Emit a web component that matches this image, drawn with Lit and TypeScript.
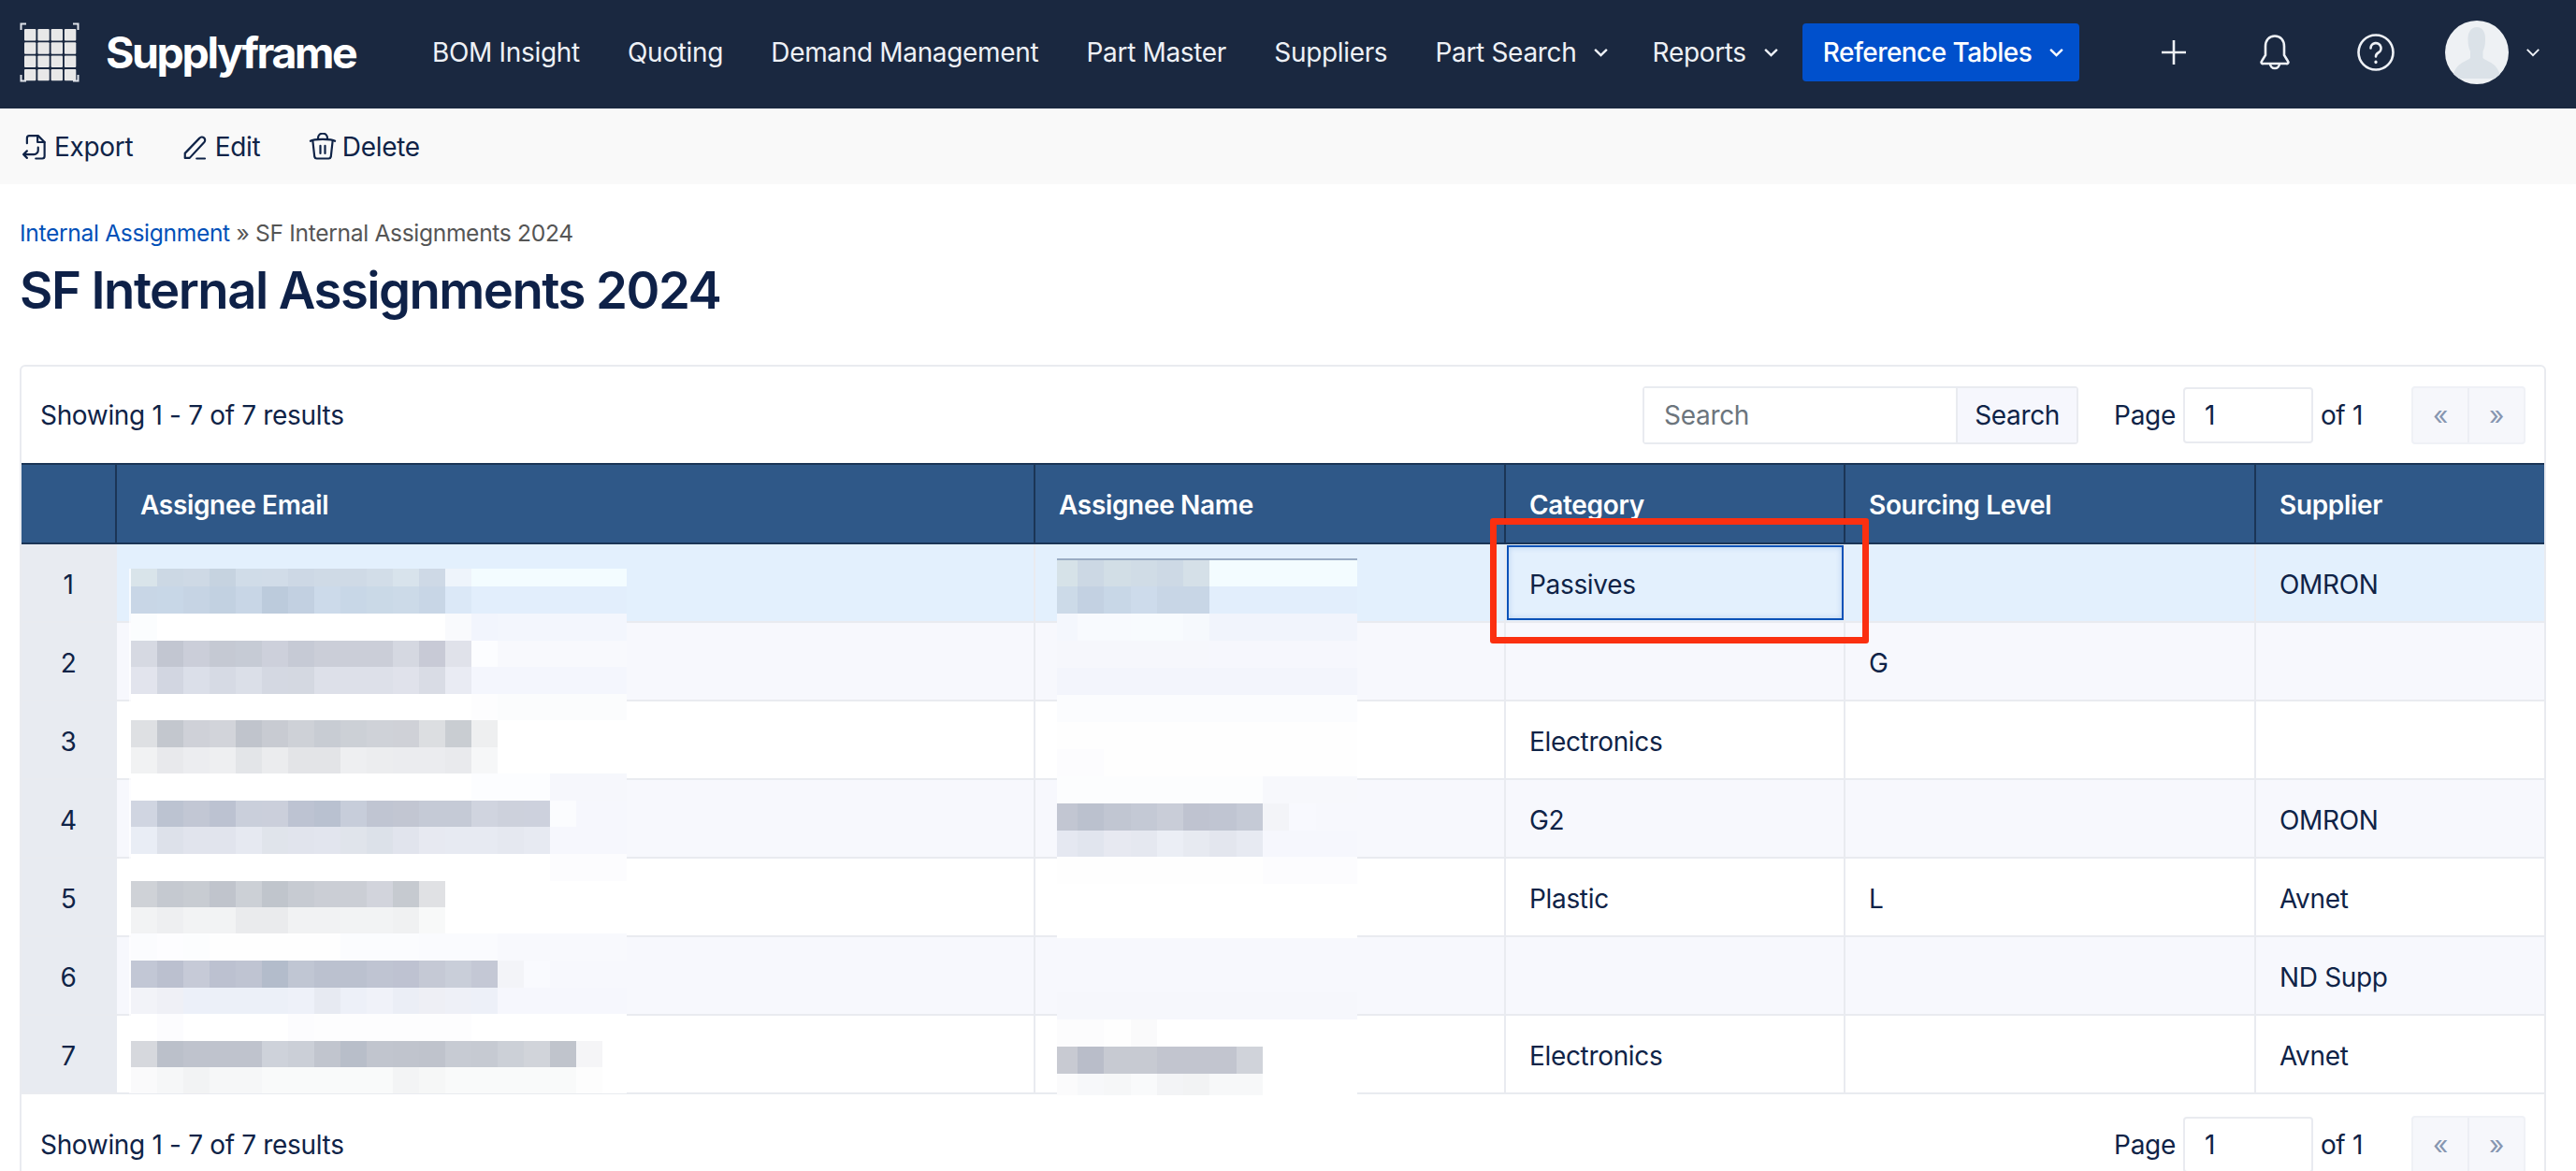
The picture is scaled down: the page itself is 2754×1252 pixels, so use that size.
import { LitElement, html, css, svg } from "lit";
import { customElement } from "lit/decorators.js";

const expand = (s: string): string[] =>
  s.split(" ").flatMap((t) => {
    const [c, n] = t.split("*");
    return Array(n ? +n : 1).fill("#" + c);
  });

const EMAIL_H = [19, 29, 29, 28, 29, 28, 29, 28, 29, 28, 29, 29, 28, 28, 29, 29, 28, 29, 28, 28];
const EMAIL = [
  "d9e4ea ccd8e4 ced9e5 c6d3e0 d0dce8 d1dce8 cdd8e5 cfdae6 cfdae6 d2dde8 d8e3ec ced9e6 eef4fb f3fcff*6",
  "c8d6e6 c8d7e7 c6d4e4 c2d1e1 c8d6e6 bccbdc c2d0e1 ccdaea c8d7e7 cad9e7 ccdae8 c8d6e6 dbe8f7 e2eefc*6",
  "fbfdfe ffffff*11 f9fafd f2f5fd f3f6fd*5",
  "d6d9e2 c2c6d1 cbced9 c5c9d3 c6cbd5 cdd0db c6cad5 cbced8 cbced8 cbced8 d5d8e1 c8cad6 e0e2ea fcfdff f8f9fd*5",
  "e2e4ed d2d6e1 dbdfe9 d6dae4 dbdfe8 d4d8e2 d4d8e1 dde0e9 dde0e9 dde0e9 e0e2eb d9dce5 e9ebf3 f4f6fd*6",
  "ffffff*13 fdfdfe fbfcfd*5",
  "dee0e3 c3c7ce cfd1d8 d2d4da c0c4cc c8cbd2 ced1d7 c8ccd3 ccd0d6 cfd2d8 cfd1d7 dcdee1 c9cdd2 eeeff0 ffffff*5",
  "f1f2f3 e8e9ec ecedf0 eeeff1 e3e5e8 ebecee e3e4e7 e3e4e7 eeeff1 ecedef ebecef ebecef e9eaed f6f7f8 ffffff*5",
  "ffffff*13 fcfdff*3 f6f7fc*3",
  "d0d5e1 bcc3d1 c2c7d4 bcc2d1 cacfdb cbcfdb bdc3d2 b9c1d0 c7cdda c0c5d2 c2c6d2 c5cad6 c5cad6 d0d4df cdd1dc cdd1dd fbfcfe f6f7fd*2",
  "e9edf5 dde1ea e1e4ed e1e4ed e6e9f1 e0e4eb e1e4ed e2e5ee e0e4eb dce1e9 e1e4ed e7e9f1 e7eaf2 e7eaf2 e5e8f0 e7eaf2 f6f7fd*3",
  "ffffff*16 fcfcfe*3",
  "cfd2d7 c5c9d0 c8ccd2 c0c4cc ccd0d6 c0c5cc c7cbd2 cbced5 cbced5 d2d4dc c6cad0 e0e1e4 ffffff*7",
  "f2f3f4 eeeff1 f2f3f4 f2f3f4 eaebed eaebed f1f2f3 f1f2f3 f2f3f4 f2f3f4 f0f1f2 f8f9f9 ffffff*7",
  "fbfcfe fdfdff fcfdfe fefefe*5 fbfcfe*3 fafbfe*3 f8f9fd*5",
  "c2c7d5 bbc0cf c6cad7 bcc1d0 bfc4d2 b3bccb c0c6d3 bbc1cf bbc1cf bfc4d2 bec2d1 c5c9d5 c9ced9 c4c8d5 f3f4f8 f9fafe f7f8fd*3",
  "f2f3f8 eff0f6 ecf0f9 ecf0f8 ecf0f8 ecf0f8 eef1f9 e7eaf2 edf0f8 f0f2f9 ebeef6 eeeff5 eef0f7 edf0f8 f6f7fd*5",
  "ffffff fcfcfe ffffff*4 fcfcfe fdfdfe*6 ffffff*6",
  "d6d8dd bbc0ca bfc3cd bfc3cd bfc3cd ced2da cbcfd7 c1c5ce b8bec9 c1c5ce c0c4cd bfc3cc c7cbd3 c6cad2 ccd0d7 d1d4da c0c4cc f5f5f7 ffffff",
  "fafafb f6f7f8 f2f3f4 f6f7f8 f6f7f8 f9fafa*5 f3f4f5 f6f7f7 f9fafa*5 fdfdfd ffffff",
];

const NAME_H = [28, 29, 29, 29, 29, 29, 29, 29, 29, 29, 28, 29, 29, 29, 29, 29, 29, 29, 29, 23];
const NAME = [
  "d6e2e8 ccd8e4 d2dee6 d0dce6 cdd9e5 d5e0e8 f3fcff*6",
  "ccdae8 c3d1e2 c8d7e7 cddbeb c8d6e6 c8d6e6 e2eefc*6",
  "f4f7fd f8fafe f8fafe f8fbfe f8fbfe f6f9fd f1f4fc*6",
  "f6f7fc*6 f6f7fd*6",
  "f3f5fc*12",
  "fbfcfe*12",
  "fefefe*12",
  "fcfcfe*2 fefefe*10",
  "fcfdfe*8 f7f8fc*4",
  "c2c6d2 bbc1ce c1c6d2 c4c9d5 c9cdd8 bfc3d0 c0c5d2 c5cad6 f3f4f8 f8f9fe f7f8fd*2",
  "e5e8f1 e1e5ee e7e9f1 e5e8f0 ebeef5 e7eaf1 e3e6ee e7eaf2 f6f7fd*4",
  "fefefe*8 fcfcfe*4",
  "ffffff*12",
  "ffffff*12",
  "f7f8fd*12",
  "f7f8fd*12",
  "f6f7fc*12",
  "fcfcfd*2 fefefe fafafb ffffff*8",
  "c8cad2 b9bdc9 c7cad2 c7cad2 c2c5cf c2c5cf c2c5cf d0d3da ffffff*4",
  "fbfbfc f7f8fa f6f7f8 f9fafb f3f4f6 f2f3f4 f7f8f9 f7f8f9 ffffff*4",
];

const ROWS = [
  ["1", "Passives", "", "OMRON"],
  ["2", "", "G", ""],
  ["3", "Electronics", "", ""],
  ["4", "G2", "", "OMRON"],
  ["5", "Plastic", "L", "Avnet"],
  ["6", "", "", "ND Supp"],
  ["7", "Electronics", "", "Avnet"],
];

const chevron = (c = "") =>
  html`<svg class="chev ${c}" viewBox="0 0 18 11"><path d="M2 2l7 7 7-7" /></svg>`;

@customElement("app-root")
export class AppRoot extends LitElement {
  static styles = css`
    :host {
      display: block;
      width: 2754px;
      height: 1252px;
      overflow: hidden;
      background: #fff;
      font-family: Inter, "Noto Sans", sans-serif;
      font-size: 28px;
      letter-spacing: -0.33px;
      color: #0f2347;
    }
    .nav {
      height: 116px;
      box-sizing: border-box;
      padding-bottom: 4px;
      background: #1a2840;
      display: flex;
      align-items: center;
      color: #eef1f6;
    }
    .logo {
      width: 64px;
      height: 64px;
      margin-left: 21px;
      flex: none;
    }
    .brand {
      margin-left: 28px;
      width: 349px;
      font-size: 46.5px;
      font-weight: 700;
      letter-spacing: -2.4px;
      color: #fff;
    }
    .links {
      display: flex;
      align-items: center;
      gap: 51.2px;
      white-space: nowrap;
    }
    .links .dd {
      display: flex;
      align-items: center;
      gap: 18px;
    }
    .links .dd + .dd {
      margin-left: -5px;
    }
    .chev {
      width: 17px;
      height: 10px;
      fill: none;
      stroke: currentColor;
      stroke-width: 2.6;
    }
    .refbtn {
      margin-left: 25px;
      height: 62px;
      width: 296px;
      box-sizing: border-box;
      padding-left: 22px;
      background: #0050cc;
      border-radius: 4px;
      display: flex;
      align-items: center;
      gap: 18px;
      color: #fff;
      font-weight: 500;
      letter-spacing: -0.55px;
      white-space: nowrap;
    }
    .tools {
      display: flex;
      align-items: center;
      margin-left: 88px;
    }
    .plus {
      width: 26px;
      height: 26px;
      stroke: #eef1f6;
      stroke-width: 2.6;
      fill: none;
    }
    .bell {
      margin-left: 78px;
      width: 34px;
      height: 38px;
      stroke: #eef1f6;
      stroke-width: 2.6;
      fill: none;
    }
    .help {
      margin-left: 71px;
      width: 40px;
      height: 40px;
      stroke: #eef1f6;
      stroke-width: 2.6;
      fill: none;
    }
    .avatar {
      margin-left: 54px;
      width: 68px;
      height: 68px;
      flex: none;
    }
    .tools .chev {
      margin-left: 18px;
      width: 16px;
      stroke-width: 2.2;
    }
    .toolbar {
      height: 81px;
      background: #f9f9f9;
      display: flex;
      align-items: center;
      padding-left: 22px;
      gap: 51.5px;
    }
    .action {
      display: flex;
      align-items: center;
      gap: 6px;
      color: #0f2347;
    }
    .action svg {
      width: 30px;
      height: 30px;
      fill: none;
      stroke: #0f2347;
      stroke-width: 1.75;
      stroke-linecap: round;
      stroke-linejoin: round;
    }
    .content {
      padding: 35px 0 0 21px;
    }
    .crumb {
      font-size: 24.6px;
      line-height: 34px;
      color: #555;
    }
    .crumb a {
      color: #0050b8;
    }
    h1 {
      margin: 10px 0 46px;
      font-size: 54.5px;
      line-height: 68px;
      font-weight: 600;
      letter-spacing: -1.55px;
      color: #0e2148;
    }
    .card {
      position: relative;
      width: 2701px;
      box-sizing: border-box;
      border: 2px solid #e9ebf0;
      border-radius: 6px 6px 0 0;
    }
    .bar {
      height: 103px;
      display: flex;
      align-items: center;
      padding: 0 20px;
    }
    .bar.foot {
      margin-top: 2px;
    }
    .spacer {
      flex: 1;
    }
    .search {
      display: flex;
      height: 62px;
      width: 466px;
      box-sizing: border-box;
      border: 2px solid #e9ebf0;
      border-radius: 4px;
      margin-right: 38px;
    }
    .search input {
      width: 333px;
      box-sizing: border-box;
      border: 0;
      padding: 0 0 0 21px;
      font: inherit;
      letter-spacing: inherit;
      outline: none;
      background: #fff;
    }
    .search input::placeholder {
      color: #6c757d;
      opacity: 1;
    }
    .search .go {
      flex: 1;
      background: #f6f7fd;
      border-left: 2px solid #e9ebf0;
      display: flex;
      align-items: center;
      justify-content: center;
    }
    .pg {
      width: 139px;
      height: 60px;
      box-sizing: border-box;
      margin: 0 8px;
      border: 2px solid #e9ebf0;
      border-radius: 4px;
      padding: 0 0 0 21px;
      font: inherit;
      letter-spacing: inherit;
      color: #0f2347;
      outline: none;
      background: #fff;
    }
    .pager {
      margin-left: 52px;
      display: flex;
      width: 122px;
      height: 62px;
      box-sizing: border-box;
      border: 2px solid #eff1f6;
      border-radius: 4px;
      background: #f6f7fb;
      color: #8696b0;
    }
    .pager span {
      flex: 1;
      display: flex;
      align-items: center;
      justify-content: center;
    }
    .pager span + span {
      border-left: 2px solid #eceef4;
    }
    .table {
      position: relative;
    }
    .row {
      display: grid;
      grid-template-columns: 102px 982px 503px 363px 439px 1fr;
      height: 84px;
      box-sizing: border-box;
    }
    .head {
      height: 87px;
      background: #2f5888;
      color: #fff;
      font-weight: 600;
      border-top: 2px solid #1b3556;
      border-bottom: 2px solid #1b3556;
    }
    .head > div {
      border-right: 2px solid #1b3556;
    }
    .head > div:last-child {
      border-right: 0;
    }
    .cell {
      display: flex;
      align-items: center;
      padding: 3px 0 0 25px;
      box-sizing: border-box;
      position: relative;
    }
    .body {
      border-bottom: 2px solid #e9ebf0;
    }
    .body.alt {
      background: #f7f8fd;
    }
    .body.sel {
      background: #e3f0fd;
    }
    .body .cell {
      border-right: 2px solid #e9ebf0;
    }
    .body .cell:last-child {
      border-right: 0;
    }
    .body .num {
      background: #e8ebf1;
      justify-content: center;
      padding: 3px 2px 0 0;
      border-right: 0;
    }
    .picked::after {
      content: "";
      position: absolute;
      inset: 1px 0 1px 1px;
      border: 2px solid #0b52b8;
      box-shadow: inset 0 0 6px rgba(11, 82, 184, 0.2);
    }
    .mosaic {
      position: absolute;
      overflow: hidden;
    }
    .mosaic.email {
      border-left: 2px solid rgba(255, 255, 255, 0.7);
    }
    .mosaic.name {
      border-top: 2px solid #9aacc4;
    }
    .mrow {
      display: flex;
    }
    .mrow div {
      flex: none;
      height: 100%;
    }
    .mark {
      position: absolute;
      left: 1570px;
      top: 59px;
      width: 405px;
      height: 134px;
      box-sizing: border-box;
      border: 7px solid #fb3010;
      border-radius: 3px;
    }
  `;

  private mosaic(cls: string, left: number, top: number, width: number, rows: string[], heights: number[], first: number, col: number) {
    return html`<div class="mosaic ${cls}" style="left:${left}px;top:${top}px;width:${width}px">
      ${rows.map(
        (r, i) => html`<div class="mrow" style="height:${heights[i]}px">
          ${expand(r).map(
            (c, j) => html`<div style="width:${j === 0 ? first : col}px;background:${c}"></div>`
          )}
        </div>`
      )}
    </div>`;
  }

  private pagerBar(search: boolean) {
    return html`<div class="bar ${search ? "" : "foot"}">
      <span>Showing 1 - 7 of 7 results</span>
      <div class="spacer"></div>
      ${search
        ? html`<div class="search">
            <input placeholder="Search" />
            <div class="go">Search</div>
          </div>`
        : ""}
      <span>Page</span>
      <input class="pg" value="1" />
      <span>of 1</span>
      <div class="pager"><span>«</span><span>»</span></div>
    </div>`;
  }

  private logo() {
    const squares = [];
    for (let y = 0; y < 4; y++)
      for (let x = 0; x < 4; x++)
        squares.push(svg`<rect x=${5 + x * 14.3} y=${7 + y * 14.3} width="12.4" height="12.4" rx="1" fill="#e8e8e8" />`);
    return html`<svg class="logo" viewBox="0 0 64 64">
      ${squares}
      <path
        d="M7 1.5H1.5V8M57 1.5h5.5V8M7 62.5H1.5V56M57 62.5h5.5V56"
        fill="none"
        stroke="#dfe3ea"
        stroke-width="2"
      />
    </svg>`;
  }

  render() {
    return html`
      <div class="nav">
        ${this.logo()}
        <div class="brand">Supplyframe</div>
        <div class="links">
          <span>BOM Insight</span>
          <span>Quoting</span>
          <span>Demand Management</span>
          <span>Part Master</span>
          <span>Suppliers</span>
          <span class="dd">Part Search ${chevron()}</span>
          <span class="dd">Reports ${chevron()}</span>
        </div>
        <div class="refbtn">Reference Tables ${chevron()}</div>
        <div class="tools">
          <svg class="plus" viewBox="0 0 26 26"><path d="M13 0v26M0 13h26" /></svg>
          <svg class="bell" viewBox="0 0 34 38">
            <path d="M17 1.5C10.500 1.500 7 6.500 7 12.500V22L3 28.500a1.500 1.500 0 0 0 1.500 2.500h25a1.500 1.500 0 0 0 1.500-2.500L27 22V12.500C27 6.500 23.500 1.500 17 1.500z" />
            <path d="M12 31a5 5 0 0 0 10 0" />
          </svg>
          <svg class="help" viewBox="0 0 40 40">
            <circle cx="20" cy="20" r="18.500" />
            <path d="M14.500 15.500a5.500 5.500 0 1 1 8 5c-1.800 1-2.500 2-2.500 4" stroke-linecap="round" />
            <path d="M20 30v.6" stroke-linecap="round" stroke-width="3.200" />
          </svg>
          <svg class="avatar" viewBox="0 0 68 68">
            <defs>
              <clipPath id="av"><circle cx="34" cy="34" r="34" /></clipPath>
            </defs>
            <g clip-path="url(#av)">
              <rect width="68" height="68" fill="#eef1f4" />
              <path
                d="M34 7c7 0 9.500 7 9 14 0 5-1 9-2.500 12v7c4 4 17 5 19 22H8c2-17 15-18 19-22v-7c-1.500-3-2.500-7-2.500-12C24 14 27 7 34 7z"
                fill="#dbe2e8"
              />
            </g>
          </svg>
          ${chevron()}
        </div>
      </div>
      <div class="toolbar">
        <div class="action">
          <svg viewBox="0 0 24 24">
            <path d="M5.500 9V4.500a2 2 0 0 1 2-2H15l5.500 5.500v12a2 2 0 0 1-2 2H13" />
            <path d="M14.500 2.500V8h6" />
            <path d="M15 12.500V15a3.500 3.500 0 0 1-3.500 3.500H2.500M5.500 15.500l-3 3 3 3" />
          </svg>
          Export
        </div>
        <div class="action">
          <svg viewBox="0 0 24 24">
            <path d="M3 21.500v-4L15.500 4.500a2.600 2.600 0 0 1 4 3.500L7 21.500H3z" />
            <path d="M13 22h7" />
          </svg>
          Edit
        </div>
        <div class="action">
          <svg viewBox="0 0 24 24">
            <path d="M1.500 7c3-2 18-2 21 0" />
            <path d="M3.500 7l1.500 13.500a2 2 0 0 0 2 1.500h10a2 2 0 0 0 2-1.500L20.500 7" />
            <path d="M8 5V4.500a4 4 0 0 1 8 0V5M10 11v6.500M14 11v6.500" />
          </svg>
          Delete
        </div>
      </div>
      <div class="content">
        <div class="crumb"><a>Internal Assignment</a> » SF Internal Assignments 2024</div>
        <h1>SF Internal Assignments 2024</h1>
        <div class="card">
          ${this.pagerBar(true)}
          <div class="table">
            <div class="row head">
              <div class="cell"></div>
              <div class="cell">Assignee Email</div>
              <div class="cell">Assignee Name</div>
              <div class="cell">Category</div>
              <div class="cell">Sourcing Level</div>
              <div class="cell">Supplier</div>
            </div>
            ${ROWS.map(
              (r, i) => html`<div class="row body ${i === 0 ? "sel" : i % 2 ? "alt" : ""}">
                <div class="cell num">${r[0]}</div>
                <div class="cell"></div>
                <div class="cell"></div>
                <div class="cell ${i === 0 ? "picked" : ""}">${r[1]}</div>
                <div class="cell">${r[2]}</div>
                <div class="cell">${r[3]}</div>
              </div>`
            )}
            ${this.mosaic("email", 115, 113, 530, EMAIL, EMAIL_H, 28, 28)}
            ${this.mosaic("name", 1107, 102, 321, NAME, NAME_H, 22, 28.3)}
            <div class="mark"></div>
          </div>
          ${this.pagerBar(false)}
        </div>
      </div>
    `;
  }
}
